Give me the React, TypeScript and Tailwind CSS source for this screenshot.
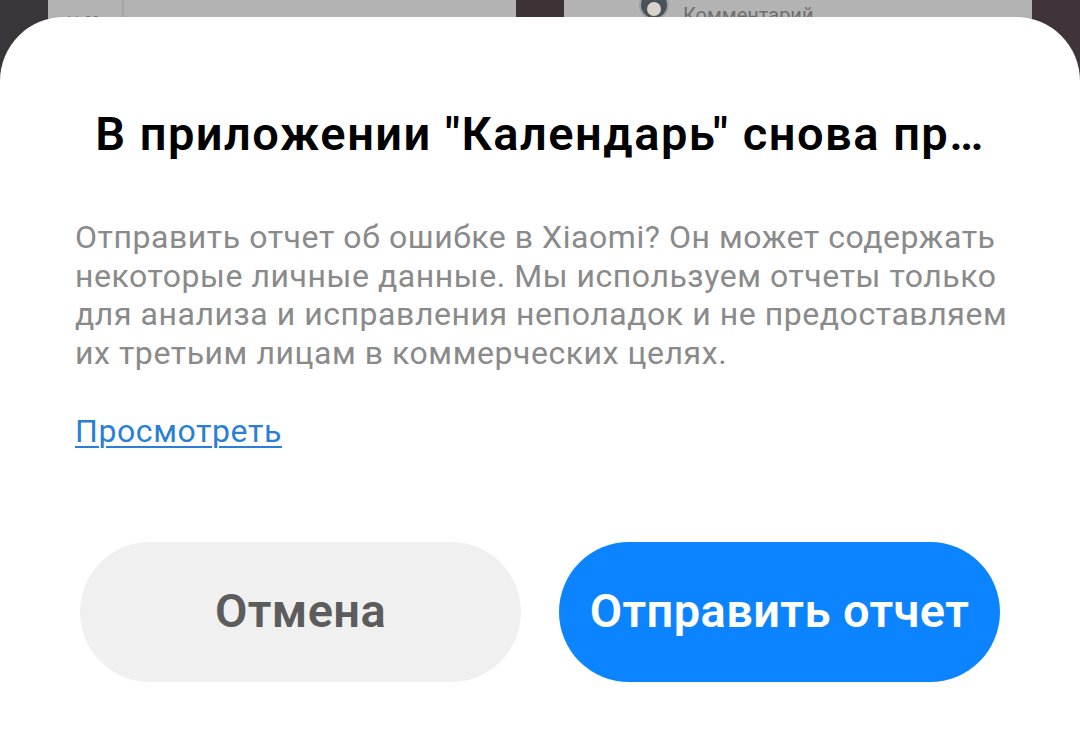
import React from 'react';

const font = { fontFamily: 'Roboto, "Noto Sans", sans-serif' };

export default function App() {
  return (
    <div className="w-[1080px] h-[737px] overflow-hidden bg-[#3b3438] flex flex-col" style={font}>
      {/* background app, mostly hidden behind the sheet */}
      <div className="h-[90px] shrink-0 flex">
        <div className="w-[48px] bg-[#38363a]" />
        <div className="w-[468px] bg-[#b3b3b3] flex">
          <div className="w-[76px] border-r-2 border-[#a8a8a8] pl-[17px] pt-[12px] text-[14px] text-[#6b6b6b]">11:00</div>
        </div>
        <div className="w-[48px] bg-[#3d3236]" />
        <div className="w-[468px] bg-[#b3b3b3] flex items-start gap-[14px] pl-[75px]">
          <div className="w-[30px] h-[30px] -mt-[10px] rounded-full bg-[#4a5258] border-2 border-[#9aa0a4] flex items-end justify-center overflow-hidden">
            <div className="w-[14px] h-[14px] rounded-full bg-[#d8d4cc] mb-[2px]" />
          </div>
          <span className="text-[20px] text-[#6e6e6e] leading-none pt-[5px]">Комментарий</span>
        </div>
        <div className="flex-1 bg-[#3f3439]" />
      </div>

      {/* dialog sheet */}
      <div className="-mt-[73px] flex-1 bg-white rounded-t-[64px] flex flex-col pt-[90px]">
        <h1 className="text-center whitespace-nowrap text-[47px] leading-[54px] font-semibold tracking-[1.5px] text-black">
          В приложении "Календарь" снова пр…
        </h1>
        <p className="mt-[57px] pl-[75px] pr-[52px] text-[32px] leading-[38.5px] tracking-[0.55px] text-[#8a8a8a]">
          Отправить отчет об ошибке в Xiaomi? Он может содержать некоторые личные данные. Мы используем отчеты только для анализа и исправления неполадок и не предоставляем их третьим лицам в коммерческих целях.
        </p>
        <div className="mt-[40px] px-[75px] text-[32px] leading-[38.5px] tracking-[0.6px]">
          <a href="#" className="text-[#2a7fd4] underline underline-offset-[4px] decoration-[2px]">Просмотреть</a>
        </div>
        <div className="mt-[91px] px-[80px] flex gap-[38px]">
          <button className="flex-1 h-[140px] rounded-full bg-[#f0f0f0] text-[#5c5c5c] text-[47px] font-semibold tracking-[0.4px]">Отмена</button>
          <button className="flex-1 h-[140px] rounded-full bg-[#0d84ff] text-white text-[47px] font-semibold tracking-[0.4px]">Отправить отчет</button>
        </div>
      </div>
    </div>
  );
}
